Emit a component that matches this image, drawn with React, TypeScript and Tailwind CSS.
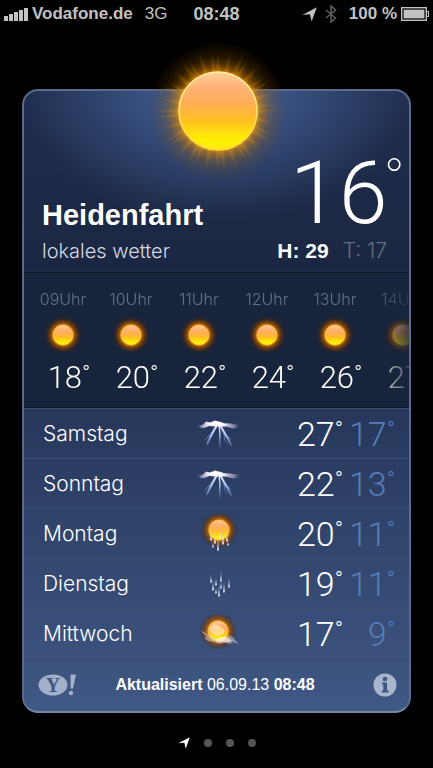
import type { CSSProperties } from "react";

type Condition = "storm" | "sunRain" | "rain" | "sunCloud";

interface Hour {
  time: string;
  temp: number;
}

interface Day {
  name: string;
  condition: Condition;
  high: number;
  low: number;
}

const HOURS: Hour[] = [
  { time: "09Uhr", temp: 18 },
  { time: "10Uhr", temp: 20 },
  { time: "11Uhr", temp: 22 },
  { time: "12Uhr", temp: 24 },
  { time: "13Uhr", temp: 26 },
  { time: "14Uhr", temp: 27 },
];

const DAYS: Day[] = [
  { name: "Samstag", condition: "storm", high: 27, low: 17 },
  { name: "Sonntag", condition: "storm", high: 22, low: 13 },
  { name: "Montag", condition: "sunRain", high: 20, low: 11 },
  { name: "Dienstag", condition: "rain", high: 19, low: 11 },
  { name: "Mittwoch", condition: "sunCloud", high: 17, low: 9 },
];

const SIGNAL_BARS = ["h-[5px]", "h-[7px]", "h-[9px]", "h-[11px]", "h-[13px]"];

// Gradients shared by every icon on the page
const Defs = () => (
  <svg className="absolute h-0 w-0" aria-hidden="true">
    <defs>
      <linearGradient id="sunFace" x1="0" y1="0" x2="0" y2="1">
        <stop offset="0" stopColor="#ffd09a" />
        <stop offset="0.2" stopColor="#ffb277" />
        <stop offset="0.4" stopColor="#ffae55" />
        <stop offset="0.62" stopColor="#ffc022" />
        <stop offset="0.88" stopColor="#fff200" />
        <stop offset="1" stopColor="#ffe91c" />
      </linearGradient>
      <linearGradient id="sunRim" x1="0" y1="0" x2="0" y2="1">
        <stop offset="0" stopColor="#fff0a8" />
        <stop offset="1" stopColor="#ffd83a" />
      </linearGradient>
      <radialGradient id="sunGlow">
        <stop offset="0.54" stopColor="#ff9d00" stopOpacity="0.85" />
        <stop offset="0.62" stopColor="#cf7a00" stopOpacity="0.55" />
        <stop offset="0.76" stopColor="#a06000" stopOpacity="0.25" />
        <stop offset="1" stopColor="#804800" stopOpacity="0" />
      </radialGradient>
      <radialGradient id="smallGlow">
        <stop offset="0.5" stopColor="#f08c00" stopOpacity="1" />
        <stop offset="0.66" stopColor="#9a4e00" stopOpacity="0.75" />
        <stop offset="0.85" stopColor="#5c2d08" stopOpacity="0.35" />
        <stop offset="1" stopColor="#4a2408" stopOpacity="0" />
      </radialGradient>
      <radialGradient id="sunRay" gradientUnits="userSpaceOnUse" cx="75" cy="75" r="72">
        <stop offset="0.52" stopColor="#f0a81a" stopOpacity="0.28" />
        <stop offset="0.9" stopColor="#b88a10" stopOpacity="0" />
      </radialGradient>
      <linearGradient id="drop" x1="0" y1="0" x2="0" y2="1">
        <stop offset="0" stopColor="#b9c6da" stopOpacity="0.05" />
        <stop offset="1" stopColor="#dfe8f4" />
      </linearGradient>
      <linearGradient id="bolt" gradientUnits="userSpaceOnUse" x1="0" y1="10" x2="0" y2="36">
        <stop offset="0" stopColor="#f4f2ff" />
        <stop offset="0.45" stopColor="#a9c2f6" />
        <stop offset="1" stopColor="#5f80c6" stopOpacity="0.1" />
      </linearGradient>
      <linearGradient id="stormCloud" x1="0" y1="0" x2="1" y2="0">
        <stop offset="0" stopColor="#a794bf" stopOpacity="0.5" />
        <stop offset="0.25" stopColor="#efe4f6" />
        <stop offset="0.6" stopColor="#f5effa" />
        <stop offset="1" stopColor="#8f83b5" stopOpacity="0.4" />
      </linearGradient>
    </defs>
  </svg>
);

const BigSun = () => {
  const rays = Array.from({ length: 36 }, (_, i) => ({
    angle: i * 10 + (i % 3) * 2,
    reach: 58 + ((i * 7) % 5) * 3,
  }));
  return (
    <svg className="h-[150px] w-[150px]" viewBox="0 0 150 150" aria-hidden="true">
      <circle cx="76" cy="75" r="70" fill="url(#sunGlow)" />
      {rays.map(({ angle, reach }) => (
        <path
          key={angle}
          d={`M73.5 ${75 - 38} L76 ${75 - reach} L78.5 ${75 - 38} Z`}
          fill="url(#sunRay)"
          transform={`rotate(${angle} 76 75)`}
        />
      ))}
      <circle cx="76" cy="75" r="39" fill="url(#sunFace)" stroke="url(#sunRim)" strokeWidth="1.6" />
    </svg>
  );
};

const SmallSun = () => (
  <g>
    <circle cx="20" cy="20" r="19" fill="url(#smallGlow)" />
    <path
      d="M20 4v32M4 20h32M9 9l22 22M31 9L9 31M14 6l12 28M26 6L14 34M6 14l28 12M6 26l28-12"
      stroke="#b46a00"
      strokeOpacity="0.25"
      strokeWidth="0.8"
    />
    <circle cx="20" cy="20" r="10" fill="url(#sunFace)" stroke="#ffd060" strokeWidth="0.6" />
  </g>
);

const Drops = ({ points }: { points: number[][] }) => (
  <g>
    {points.map(([x, y, len]) => (
      <path
        key={`${x}-${y}`}
        d={`M${x} ${y - len} L${x + 0.9} ${y - 1} A1 1.1 0 1 1 ${x - 0.9} ${y - 1} Z`}
        fill="url(#drop)"
      />
    ))}
  </g>
);

const ConditionIcon = ({ condition }: { condition: Condition }) => (
  <svg className="h-10 w-12" viewBox="2 0 48 40" aria-label={condition} role="img">
    {condition === "storm" && (
      <g>
        <g fill="none" stroke="url(#bolt)" strokeLinecap="round" strokeLinejoin="round">
          <path d="M22 11L18 18L15 24L12 30" strokeWidth="2" />
          <path d="M17.5 18L13 23L10 26" strokeWidth="0.6" />
          <path d="M24 11L25 20L24.6 27L25.4 34" strokeWidth="1.4" />
          <path d="M25 11L29 18L32 23L36 31" strokeWidth="2" />
          <path d="M29 19L29.5 25L32 30M31 21L36 25" strokeWidth="0.6" />
        </g>
        <path
          d="M2 12.6L8 10.5L11 7.6L15 8.4L20 6.6L26 8L29 9.2L36 9.4L40 10.6L45 11L40 12.4L44 13.6L38 14.6L32 12.8L26 12.4L20 12.6L14 12L9 14L4 14L7 12.6Z"
          fill="url(#stormCloud)"
        />
        <path d="M12 9.6L20 8L26 9L33 10.6L26 11.4L18 11Z" fill="#fff" />
      </g>
    )}
    {condition === "sunRain" && (
      <g>
        <g transform="translate(4 -4)">
          <SmallSun />
        </g>
        <Drops points={[[16, 26, 14], [20, 29, 16], [23, 36, 17], [28, 30, 17], [32, 27, 12], [25, 24, 12], [18, 33, 6], [33, 31, 5]]} />
      </g>
    )}
    {condition === "rain" && (
      <Drops
        points={[[16, 18, 9], [18, 26, 12], [21, 21, 9], [24, 32, 14], [26, 17, 12], [29, 28, 13], [34, 23, 11], [26, 24, 8], [21, 29, 6]]}
      />
    )}
    {condition === "sunCloud" && (
      <g>
        <g transform="translate(3 -3)">
          <SmallSun />
        </g>
        <path d="M15 14c3-5 9-4 11 0c5 0 5 6 0 7c-5 2-11 1-11-7z" fill="#fff5cf" fillOpacity="0.55" />
        <path
          d="M6 17L11 19L15 22L20 24L27 25L33 21L38 23L40 26L44 30L38 28L35 30L29 28L25 30L19 28L13 27L9 24L12 23Z"
          fill="#e2d3d0"
          fillOpacity="0.5"
        />
        <path d="M20 27q5-5 11-4q3 1 6 4q-8 3-17 0z" fill="#fff" fillOpacity="0.6" />
      </g>
    )}
  </svg>
);

const LocationArrow = ({ className }: { className: string }) => (
  <svg className={className} viewBox="0 0 14 14" aria-hidden="true">
    <path d="M13.8 0.2L9 13.6L7.4 6.8L0.4 7.4Z" fill="currentColor" />
  </svg>
);

const StatusBar = () => (
  <header className="grid h-7 grid-cols-[1fr_auto_1fr] items-center px-1 font-['Liberation_Sans',Arial,sans-serif] text-lg font-bold text-[#c2c2c2]">
    <div className="flex items-center gap-1">
      <div className="flex items-end gap-px">
        {SIGNAL_BARS.map((height) => (
          <span key={height} className={`w-1 bg-[#c2c2c2] ${height}`} />
        ))}
      </div>
      <span className="text-[17px]">Vodafone.de</span>
      <span className="ml-2 text-[17px] font-normal">3G</span>
    </div>
    <time>08:48</time>
    <div className="flex items-center justify-end gap-2">
      <LocationArrow className="h-[15px] w-[15px]" />
      <svg className="h-[18px] w-3" viewBox="0 0 12 18" aria-hidden="true">
        <path d="M1 5L10.5 13L6 17V1L10.5 5L1 13" fill="none" stroke="#5c5c5c" strokeWidth="1.6" />
      </svg>
      <span className="ml-1 whitespace-nowrap text-[17px]">100 %</span>
      <svg className="-ml-1 h-[14px] w-7" viewBox="0 0 28 14" aria-hidden="true">
        <rect x="0.7" y="0.7" width="24.6" height="12.6" fill="none" stroke="currentColor" strokeWidth="1.4" />
        <rect x="2.6" y="2.6" width="20.8" height="8.8" fill="currentColor" />
        <path d="M25.5 4.5h2v5h-2" fill="none" stroke="currentColor" strokeWidth="1.2" />
      </svg>
    </div>
  </header>
);

const CurrentWeather = () => (
  <section className="flex h-[181px] items-end justify-between pr-1 pb-[3px] pl-[18px]">
    <div>
      <h1 className="font-['Liberation_Sans',Arial,sans-serif] text-[29px] leading-9 font-bold">Heidenfahrt</h1>
      <p className="font-['Inter',sans-serif] text-xl leading-9 font-light text-[#d4dae4]">lokales wetter</p>
    </div>
    <div>
      <div className="flex items-start justify-end font-['Roboto',sans-serif] font-light">
        <span className="text-[88px] leading-[80px]">16</span>
        <span className="-ml-1 text-[56px] leading-[52px] font-thin">°</span>
      </div>
      <p className="flex justify-end gap-[14px] pr-[18px] text-[21px] leading-9">
        <span className="font-['Liberation_Sans',Arial,sans-serif] font-bold">H: 29</span>
        <span className="font-['Inter',sans-serif] font-light text-[#626d84]">T: 17</span>
      </p>
    </div>
  </section>
);

const FADE: CSSProperties = {
  maskImage: "linear-gradient(to right, black 90%, rgba(0, 0, 0, 0.2) 100%)",
};

const HourlyForecast = () => (
  <section className="border-y border-t-[#101a2b] border-b-[#0f1828] bg-[#18243b]">
    <ul className="flex h-[134px] overflow-hidden pt-2 pl-[5px]" style={FADE}>
      {HOURS.map(({ time, temp }) => (
        <li key={time} className="flex w-[68px] shrink-0 flex-col items-center pt-1">
          <span className="font-['Inter',sans-serif] text-base leading-7 font-light text-[#667086]">{time}</span>
          <svg className="mt-[2px] mb-[3px] h-10 w-10" viewBox="0 0 40 40" role="img" aria-label="sun">
            <SmallSun />
          </svg>
          <span className="flex items-start pl-3 font-['Roboto',sans-serif] font-light">
            <span className="text-[31px] leading-10">{temp}</span>
            <span className="text-[22px] leading-8">°</span>
          </span>
        </li>
      ))}
    </ul>
  </section>
);

const DailyForecast = () => (
  <table className="w-full table-fixed border-collapse">
    <tbody>
      {DAYS.map(({ name, condition, high, low }) => (
        <tr key={name} className="h-[50px] border-t border-[#3c4e72]">
          <th className="w-[45%] pl-[19px] text-left font-['Inter',sans-serif] text-[21px] leading-10 font-light">{name}</th>
          <td className="w-12">
            <ConditionIcon condition={condition} />
          </td>
          <td className="pr-[14px]">
            <div className="flex justify-end gap-1 font-['Roboto',sans-serif] font-light">
              <span className="flex items-start">
                <span className="text-[34px] leading-10">{high}</span>
                <span className="text-[22px] leading-8">°</span>
              </span>
              <span className="flex w-12 items-start justify-end text-[#557db8]">
                <span className="text-[34px] leading-10">{low}</span>
                <span className="text-[22px] leading-8">°</span>
              </span>
            </div>
          </td>
        </tr>
      ))}
    </tbody>
  </table>
);

const CardFooter = () => (
  <footer className="flex h-[52px] items-center justify-between border-t border-[#34496d] pr-3 pl-[13px]">
    <a href="#" aria-label="Yahoo">
      <svg className="h-6 w-10" viewBox="0 0 40 24">
        <ellipse cx="16" cy="12" rx="14.5" ry="10.5" fill="#a3b0c9" />
        <text x="16" y="19" textAnchor="middle" fontFamily="Liberation Serif, serif" fontSize="20" fontWeight="700" fill="#3f5782">
          Y
        </text>
        <path d="M33.5 1.5H39L36 15.5H33.6Z" fill="#a3b0c9" />
        <circle cx="34" cy="20" r="2.2" fill="#a3b0c9" />
      </svg>
    </a>
    <p className="pr-5 font-['Liberation_Sans',Arial,sans-serif] text-base">
      <b>Aktualisiert</b> 06.09.13 <b>08:48</b>
    </p>
    <button type="button" aria-label="Info" className="h-6 w-6">
      <svg className="h-6 w-6" viewBox="0 0 24 24">
        <circle cx="12" cy="12" r="11.5" fill="#a9b5cc" />
        <circle cx="12" cy="6" r="2.3" fill="#3f5782" />
        <path d="M9 9.5h5v8h1.5v2H8.8v-2h1.5v-6H9z" fill="#3f5782" />
      </svg>
    </button>
  </footer>
);

const App = () => (
  <div className="flex min-h-screen flex-col bg-black text-white">
    <Defs />
    <StatusBar />
    <main className="relative mx-[22px] mt-[61px] rounded-2xl border-2 border-[#5c6b8d] border-b-[#7686a8] bg-[radial-gradient(ellipse_200px_130px_at_50%_0,#46649d,transparent),linear-gradient(#1f2d4d,#1b2742_28%,#26365a_50%,#405884)]">
      <div className="absolute -top-[55px] left-1/2 -translate-x-1/2">
        <BigSun />
      </div>
      <CurrentWeather />
      <HourlyForecast />
      <DailyForecast />
      <CardFooter />
    </main>
    <nav className="mt-6 flex items-center justify-center gap-[14px]" aria-label="Seiten">
      <button type="button" aria-label="Lokal" className="text-white">
        <LocationArrow className="h-3 w-3" />
      </button>
      {[1, 2, 3].map((page) => (
        <button key={page} type="button" aria-label={`Seite ${page}`} className="h-2 w-2 rounded-full bg-[#555]" />
      ))}
    </nav>
  </div>
);

export default App;
